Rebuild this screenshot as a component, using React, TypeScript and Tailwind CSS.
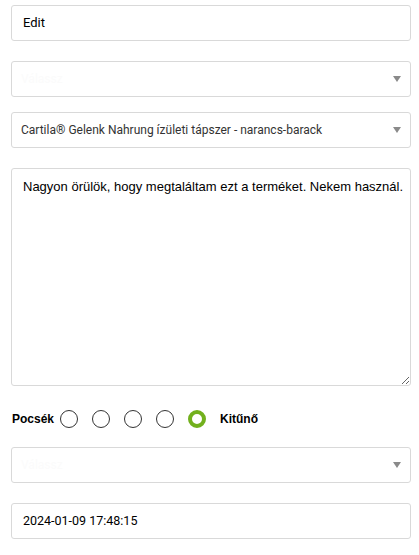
import React from "react";

const Arrow = () => (
  <svg width="8" height="6" viewBox="0 0 8 6" className="shrink-0">
    <path d="M0 0 L8 0 L4 6 Z" fill="#8a8a8a" />
  </svg>
);

const Select = ({ text, faint }: { text: string; faint?: boolean }) => (
  <div className="h-[36px] border border-[#d9d9d9] rounded-[3px] bg-white flex items-center justify-between pl-[9px] pr-[9px]">
    <span
      className={
        faint
          ? "text-[12px] text-[#fbfbfb]"
          : "text-[12px] text-[#333333]"
      }
      style={{ fontFamily: "Roboto, 'Liberation Sans', sans-serif" }}
    >
      {text}
    </span>
    <Arrow />
  </div>
);

const Radio = ({ checked }: { checked?: boolean }) =>
  checked ? (
    <span className="w-[18px] h-[18px] rounded-full border-[4px] border-[#72b01d] bg-white inline-block shrink-0" />
  ) : (
    <span className="w-[18px] h-[18px] rounded-full border border-[#333333] bg-white inline-block shrink-0" />
  );

export default function App() {
  return (
    <div
      className="w-[419px] h-[555px] bg-white pt-[5px] pl-[11px]"
      style={{ fontFamily: "Roboto, 'Liberation Sans', sans-serif" }}
    >
      <div className="w-[400px] flex flex-col">
        <div className="h-[36px] border border-[#d9d9d9] rounded-[3px] flex items-center px-[11px] text-[13px] text-black">
          Edit
        </div>
        <div className="mt-[20px]">
          <Select text="Válassz" faint />
        </div>
        <div className="mt-[15px]">
          <Select text="Cartila® Gelenk Nahrung ízületi tápszer - narancs-barack" />
        </div>
        <textarea
          readOnly
          className="mt-[20px] h-[218px] w-full border border-[#d9d9d9] rounded-[3px] pl-[11px] pr-[2px] py-[8px] text-[13px] text-black outline-none resize-y"
          style={{ fontFamily: "'Liberation Sans', Arial, sans-serif" }}
          defaultValue="Nagyon örülök, hogy megtaláltam ezt a terméket. Nekem használ."
        />
        <div
          className="mt-[23px] h-[20px] flex items-center text-[12px] font-bold text-black"
          style={{ fontFamily: "'Liberation Sans', Arial, sans-serif" }}
        >
          <span className="pl-[1px]">Pocsék</span>
          <div className="ml-[6px] flex items-center gap-[14px]">
            <Radio />
            <Radio />
            <Radio />
            <Radio />
            <Radio checked />
          </div>
          <span className="ml-[14px]">Kitűnő</span>
        </div>
        <div className="mt-[18px]">
          <Select text="Válassz" faint />
        </div>
        <div className="mt-[20px] h-[36px] border border-[#d9d9d9] rounded-[3px] flex items-center px-[11px] text-[12.5px] text-black">
          2024-01-09 17:48:15
        </div>
      </div>
    </div>
  );
}
